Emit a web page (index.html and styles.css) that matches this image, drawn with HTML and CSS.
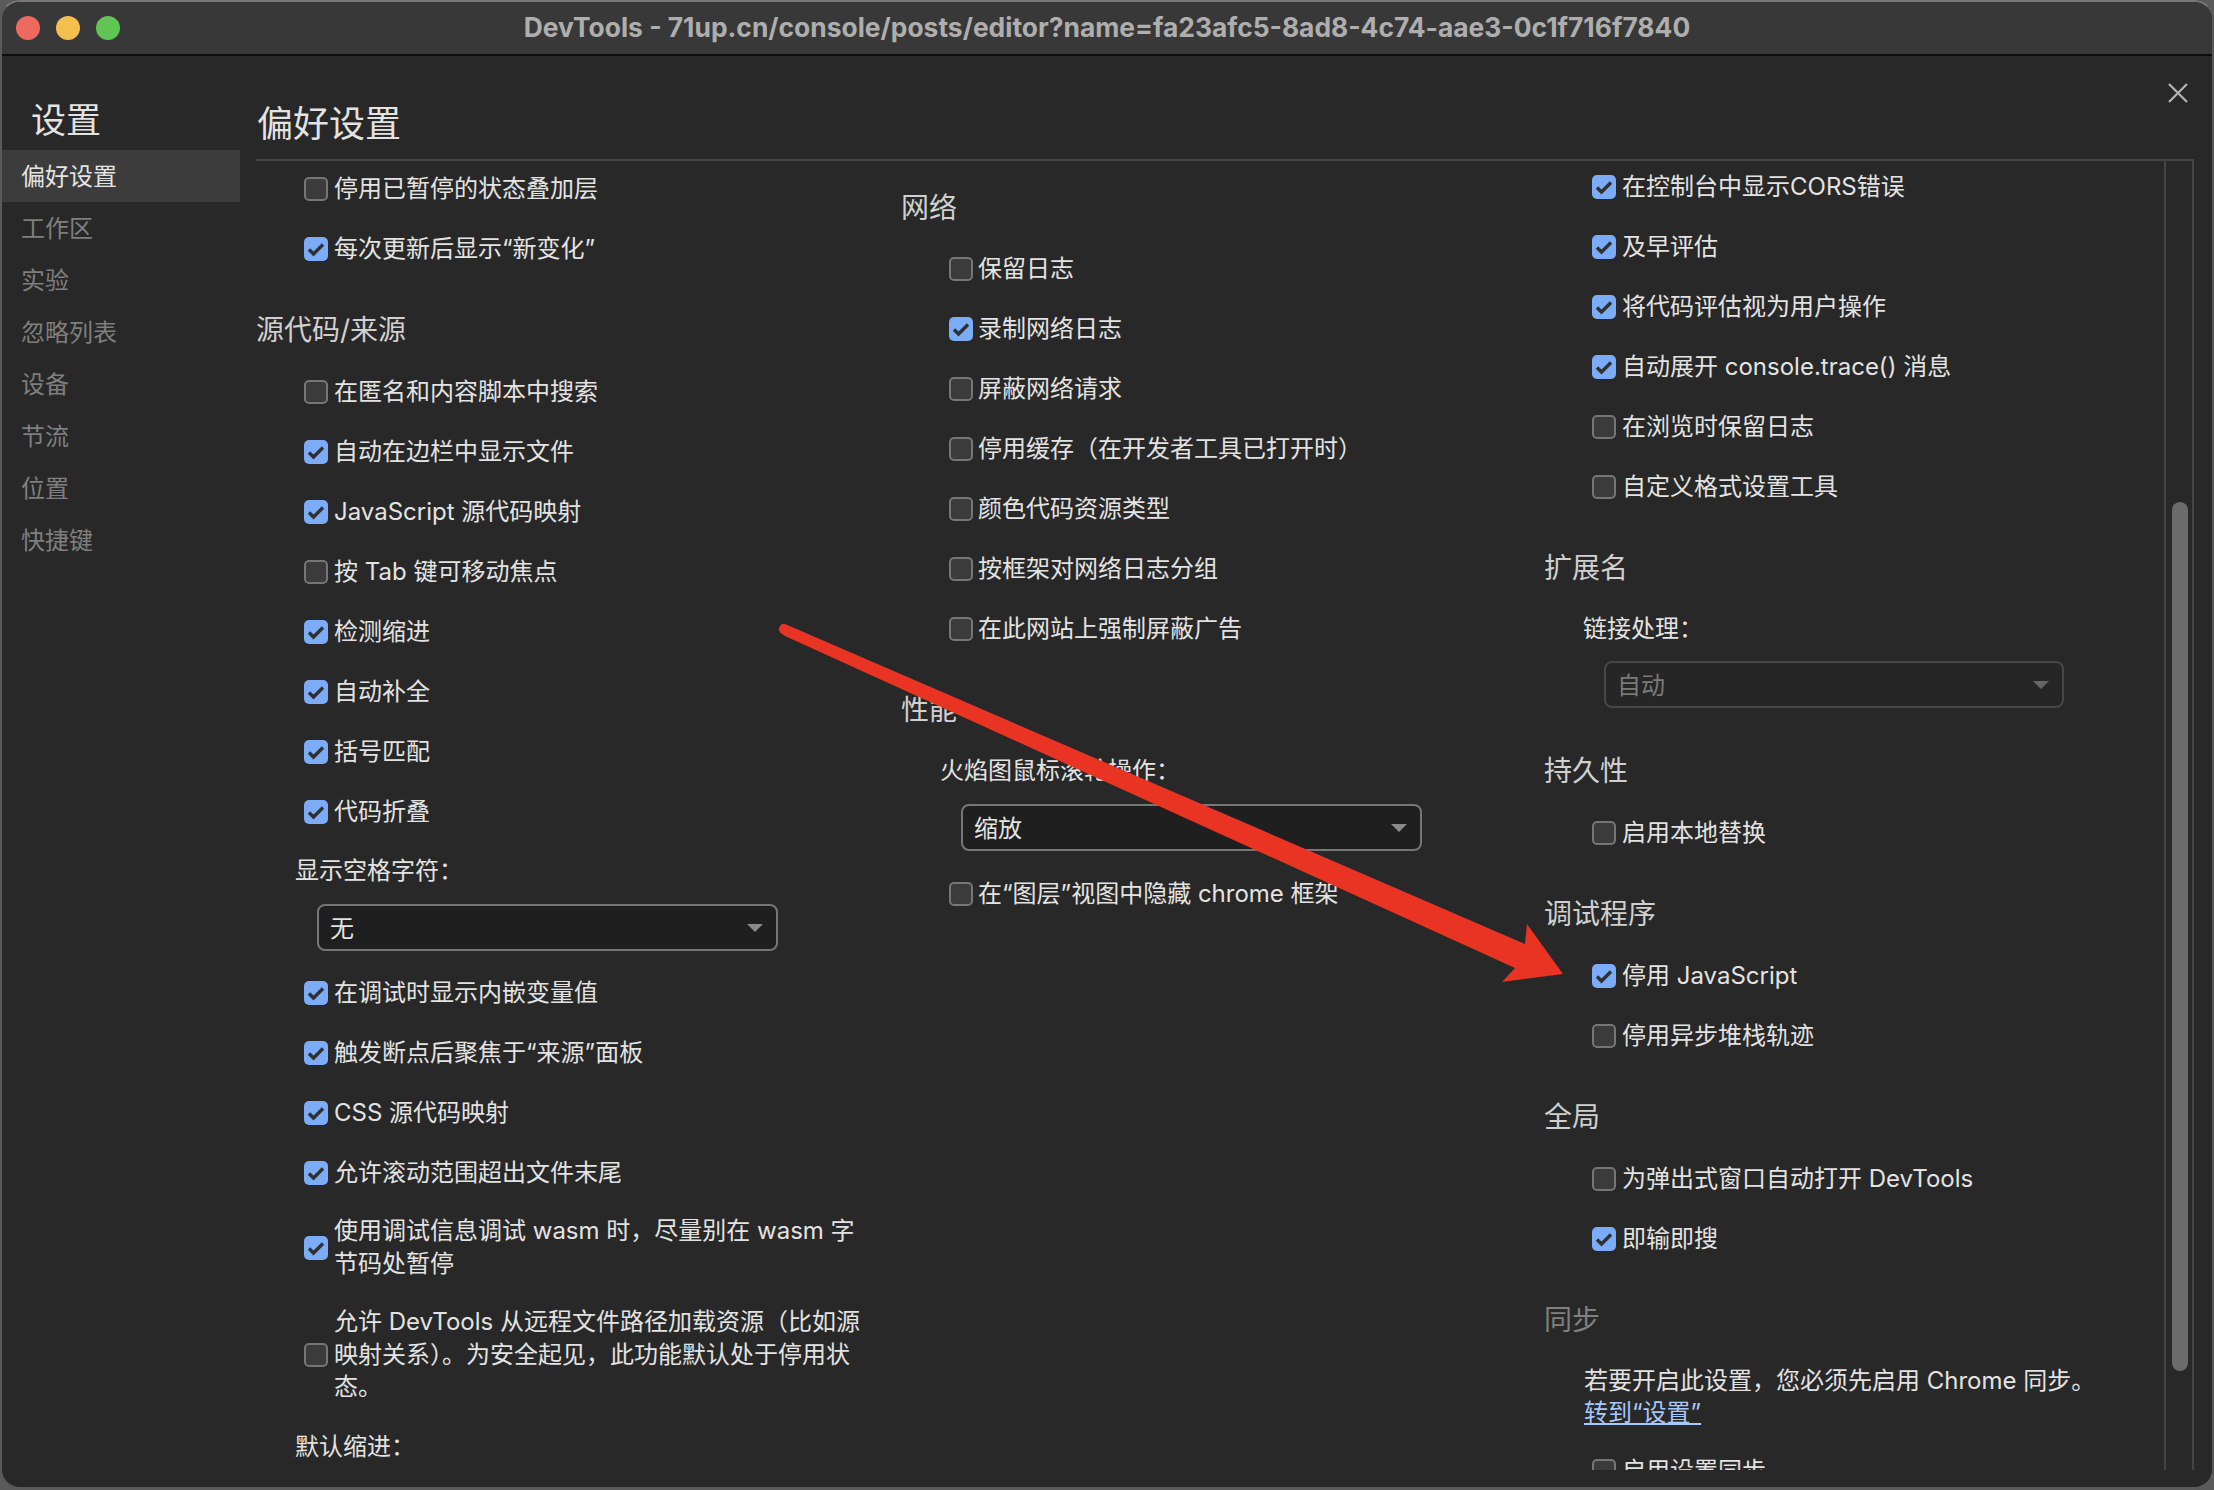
FILE: index.html
```html
<!DOCTYPE html>
<html lang="zh-CN">
<head>
<meta charset="utf-8">
<title>DevTools</title>
<link rel="stylesheet" href="styles.css">
</head>
<body>
<div class="window">
  <header class="titlebar">
    <div class="lights"><span class="light red"></span><span class="light yellow"></span><span class="light green"></span></div>
    <div class="wintitle">DevTools - 71up.cn/console/posts/editor?name=fa23afc5-8ad8-4c74-aae3-0c1f716f7840</div>
  </header>
  <div class="body">
    <nav class="sidebar">
      <h1 class="side-title">设置</h1>
      <a class="nav-item active">偏好设置</a>
      <a class="nav-item">工作区</a>
      <a class="nav-item">实验</a>
      <a class="nav-item">忽略列表</a>
      <a class="nav-item">设备</a>
      <a class="nav-item">节流</a>
      <a class="nav-item">位置</a>
      <a class="nav-item">快捷键</a>
    </nav>
    <main class="main">
      <div class="main-head">
        <h1 class="main-title">偏好设置</h1>
        <svg class="close" viewBox="0 0 20 20"><path d="M1 1 19 19M19 1 1 19"/></svg>
      </div>
      <div class="panel">
        <div class="columns">
          <section class="col col1">
            <div class="row"><span class="cb"></span><span class="lbl">停用已暂停的状态叠加层</span></div>
            <div class="row"><span class="cb on"><svg viewBox="0 0 24 24"><path d="M5 12.5 9.5 17 19 7.5"/></svg></span><span class="lbl">每次更新后显示“新变化”</span></div>
            <h2 class="head">源代码/来源</h2>
            <div class="row"><span class="cb"></span><span class="lbl">在匿名和内容脚本中搜索</span></div>
            <div class="row"><span class="cb on"><svg viewBox="0 0 24 24"><path d="M5 12.5 9.5 17 19 7.5"/></svg></span><span class="lbl">自动在边栏中显示文件</span></div>
            <div class="row"><span class="cb on"><svg viewBox="0 0 24 24"><path d="M5 12.5 9.5 17 19 7.5"/></svg></span><span class="lbl">JavaScript 源代码映射</span></div>
            <div class="row"><span class="cb"></span><span class="lbl">按 Tab 键可移动焦点</span></div>
            <div class="row"><span class="cb on"><svg viewBox="0 0 24 24"><path d="M5 12.5 9.5 17 19 7.5"/></svg></span><span class="lbl">检测缩进</span></div>
            <div class="row"><span class="cb on"><svg viewBox="0 0 24 24"><path d="M5 12.5 9.5 17 19 7.5"/></svg></span><span class="lbl">自动补全</span></div>
            <div class="row"><span class="cb on"><svg viewBox="0 0 24 24"><path d="M5 12.5 9.5 17 19 7.5"/></svg></span><span class="lbl">括号匹配</span></div>
            <div class="row"><span class="cb on"><svg viewBox="0 0 24 24"><path d="M5 12.5 9.5 17 19 7.5"/></svg></span><span class="lbl">代码折叠</span></div>
            <div class="field-label">显示空格字符：</div>
            <div class="select sel-col1"><span class="sel-text">无</span><i class="caret"></i></div>
            <div class="row"><span class="cb on"><svg viewBox="0 0 24 24"><path d="M5 12.5 9.5 17 19 7.5"/></svg></span><span class="lbl">在调试时显示内嵌变量值</span></div>
            <div class="row"><span class="cb on"><svg viewBox="0 0 24 24"><path d="M5 12.5 9.5 17 19 7.5"/></svg></span><span class="lbl">触发断点后聚焦于“来源”面板</span></div>
            <div class="row"><span class="cb on"><svg viewBox="0 0 24 24"><path d="M5 12.5 9.5 17 19 7.5"/></svg></span><span class="lbl">CSS 源代码映射</span></div>
            <div class="row"><span class="cb on"><svg viewBox="0 0 24 24"><path d="M5 12.5 9.5 17 19 7.5"/></svg></span><span class="lbl">允许滚动范围超出文件末尾</span></div>
            <div class="row wrapped"><span class="cb on"><svg viewBox="0 0 24 24"><path d="M5 12.5 9.5 17 19 7.5"/></svg></span><span class="lbl">使用调试信息调试 wasm 时，尽量别在 wasm 字<br>节码处暂停</span></div>
            <div class="row wrapped"><span class="cb"></span><span class="lbl">允许 DevTools 从远程文件路径加载资源（比如源<br>映射关系）。为安全起见，此功能默认处于停用状<br>态。</span></div>
            <div class="field-label">默认缩进：</div>
          </section>
          <section class="col col2">
            <h2 class="head">网络</h2>
            <div class="row"><span class="cb"></span><span class="lbl">保留日志</span></div>
            <div class="row"><span class="cb on"><svg viewBox="0 0 24 24"><path d="M5 12.5 9.5 17 19 7.5"/></svg></span><span class="lbl">录制网络日志</span></div>
            <div class="row"><span class="cb"></span><span class="lbl">屏蔽网络请求</span></div>
            <div class="row"><span class="cb"></span><span class="lbl">停用缓存（在开发者工具已打开时）</span></div>
            <div class="row"><span class="cb"></span><span class="lbl">颜色代码资源类型</span></div>
            <div class="row"><span class="cb"></span><span class="lbl">按框架对网络日志分组</span></div>
            <div class="row"><span class="cb"></span><span class="lbl">在此网站上强制屏蔽广告</span></div>
            <h2 class="head">性能</h2>
            <div class="field-label">火焰图鼠标滚轮操作：</div>
            <div class="select sel-col2"><span class="sel-text">缩放</span><i class="caret"></i></div>
            <div class="row"><span class="cb"></span><span class="lbl">在“图层”视图中隐藏 chrome 框架</span></div>
          </section>
          <section class="col col3">
            <div class="row"><span class="cb on"><svg viewBox="0 0 24 24"><path d="M5 12.5 9.5 17 19 7.5"/></svg></span><span class="lbl">在控制台中显示CORS错误</span></div>
            <div class="row"><span class="cb on"><svg viewBox="0 0 24 24"><path d="M5 12.5 9.5 17 19 7.5"/></svg></span><span class="lbl">及早评估</span></div>
            <div class="row"><span class="cb on"><svg viewBox="0 0 24 24"><path d="M5 12.5 9.5 17 19 7.5"/></svg></span><span class="lbl">将代码评估视为用户操作</span></div>
            <div class="row"><span class="cb on"><svg viewBox="0 0 24 24"><path d="M5 12.5 9.5 17 19 7.5"/></svg></span><span class="lbl">自动展开 console.trace() 消息</span></div>
            <div class="row"><span class="cb"></span><span class="lbl">在浏览时保留日志</span></div>
            <div class="row"><span class="cb"></span><span class="lbl">自定义格式设置工具</span></div>
            <h2 class="head">扩展名</h2>
            <div class="field-label">链接处理：</div>
            <div class="select sel-col3 disabled"><span class="sel-text">自动</span><i class="caret"></i></div>
            <h2 class="head">持久性</h2>
            <div class="row"><span class="cb"></span><span class="lbl">启用本地替换</span></div>
            <h2 class="head">调试程序</h2>
            <div class="row"><span class="cb on"><svg viewBox="0 0 24 24"><path d="M5 12.5 9.5 17 19 7.5"/></svg></span><span class="lbl">停用 JavaScript</span></div>
            <div class="row"><span class="cb"></span><span class="lbl">停用异步堆栈轨迹</span></div>
            <h2 class="head">全局</h2>
            <div class="row"><span class="cb"></span><span class="lbl">为弹出式窗口自动打开 DevTools</span></div>
            <div class="row"><span class="cb on"><svg viewBox="0 0 24 24"><path d="M5 12.5 9.5 17 19 7.5"/></svg></span><span class="lbl">即输即搜</span></div>
            <h2 class="head muted">同步</h2>
            <p class="note">若要开启此设置，您必须先启用 Chrome 同步。<br><a class="link">转到“设置”</a></p>
            <div class="row"><span class="cb"></span><span class="lbl">启用设置同步</span></div>
          </section>
        </div>
        <div class="scrolltrack"><div class="thumb"></div></div>
      </div>
    </main>
  </div>
  <svg class="arrow" viewBox="0 0 2214 1490"><path d="M785 624 L1525 944 L1527 924 L1563 974 L1502 982 L1515 968 L785 636 Q776 631 780 626 Q782 623 785 624 Z"/></svg>
</div>
</body>
</html>
```
FILE: styles.css
```css
* { box-sizing: border-box; }
html, body { margin: 0; padding: 0; background: #5a5a5a; }
body { width: 2214px; height: 1490px; overflow: hidden; font-family: Inter, "Noto Sans CJK SC", sans-serif; font-size: 24px; color: #e3e3e3; }
h1, h2, p { margin: 0; font-weight: 400; }

.window { position: relative; width: 2214px; height: 1490px; background: #282828; border-radius: 20px; overflow: hidden; display: flex; flex-direction: column; border: 2px solid #5a5a5a; border-bottom-width: 3px; border-top-color: #777; }
.arrow { position: absolute; left: -2px; top: -2px; width: 2214px; height: 1490px; fill: #e93323; pointer-events: none; }

.titlebar { flex: none; height: 55px; margin-top: -1px; padding-left: 14px; display: flex; align-items: center; position: relative; background: #383838; border-bottom: 2px solid #0c0c0c; }
.lights { display: flex; gap: 16px; }
.light { width: 24px; height: 24px; border-radius: 50%; }
.red { background: #ee6a5f; }
.yellow { background: #f5bf4f; }
.green { background: #61c554; }
.wintitle { flex: 1; text-align: center; font-size: 26.4px; line-height: 32px; padding-bottom: 2px; font-weight: 700; color: #aeaeae; white-space: nowrap; margin-right: 112px; margin-left: -6px; }

.body { flex: 1; display: flex; min-height: 0; }
.sidebar { flex: none; width: 254px; display: flex; flex-direction: column; }
.side-title { font-size: 35px; line-height: 44px; margin: 42px 0 8px 29px; color: #e3e3e3; }
.nav-item { width: 238px; height: 52px; line-height: 54px; padding-left: 19px; color: #7f7f7f; }
.nav-item.active { background: #3c3c3c; color: #e3e3e3; }

.main { flex: 1; min-width: 0; display: flex; flex-direction: column; padding-right: 18px; padding-bottom: 17px; }
.main-head { flex: none; height: 103px; display: flex; align-items: flex-end; justify-content: space-between; position: relative; }
.main-title { font-size: 36px; line-height: 50px; margin: 0 0 10px 1px; color: #e3e3e3; }
.close { position: absolute; right: 6px; top: 27px; width: 20px; height: 20px; fill: none; stroke: #b4b4b4; stroke-width: 2.2; }

.panel { flex: 1; min-height: 0; display: flex; border-top: 2px solid #444; border-right: 2px solid #444; }
.columns { flex: 1; min-width: 0; display: flex; overflow: hidden; }
.col { flex: none; }
.col1 { width: 645px; padding-top: 10px; }
.col2 { width: 643px; padding-top: 27px; }
.col3 { flex: 1; padding-top: 8px; }

.scrolltrack { flex: none; width: 28px; border-left: 2px solid #444; padding: 341px 4px 0 6px; }
.thumb { width: 16px; height: 869px; border-radius: 8px; background: #6b6b6b; }

.row { display: flex; align-items: center; gap: 6px; min-height: 36px; margin: 0 0 24px 48px; line-height: 32.5px; white-space: nowrap; }
.col2 .row { gap: 5px; }
.wrapped { margin-bottom: 26px; }
.cb { flex: none; width: 24px; height: 24px; border-radius: 5px; background: #3b3b3b; border: 2px solid #767676; }
.cb.on { background: #7cacf8; border: 0; }
.cb svg { display: block; width: 24px; height: 24px; fill: none; stroke: #303030; stroke-width: 3.4; }
.lbl { display: block; }

.head { font-size: 28px; line-height: 40px; color: #d0d0d0; }
.head.muted { color: #808080; }
.col1 .head { margin: 43px 0 24px 0; }
.col2 .head { margin: 0 0 23px 0; }
.col2 .head ~ .head { margin: 43px 0 24px 0; }
.col3 .head { margin: 43px 0 24px 0; }
.col3 .head.muted { margin-bottom: 25px; }

.field-label { height: 34px; line-height: 34px; margin-left: 39px; }
.select { display: flex; align-items: center; justify-content: space-between; height: 47px; padding: 0 13px 0 11px; border: 2px solid #767676; border-radius: 8px; background: #1f1f1f; }
.sel-text { padding-bottom: 3px; }
.sel-col1 { width: 461px; margin: 16px 0 24px 61px; }
.sel-col2 { width: 461px; margin: 16px 0 25px 60px; }
.sel-col3 { width: 460px; margin: 15px 0 29px 60px; }
.select.disabled { border-color: #474747; background: #262626; color: #7a7a7a; }
.caret { width: 0; height: 0; border-left: 8px solid transparent; border-right: 8px solid transparent; border-top: 8px solid #8a8a8a; }
.disabled .caret { border-top-color: #666; }

.note { margin-left: 40px; line-height: 32px; margin-bottom: 24px; }
.link { color: #a8c7fa; text-decoration: underline; }
```
